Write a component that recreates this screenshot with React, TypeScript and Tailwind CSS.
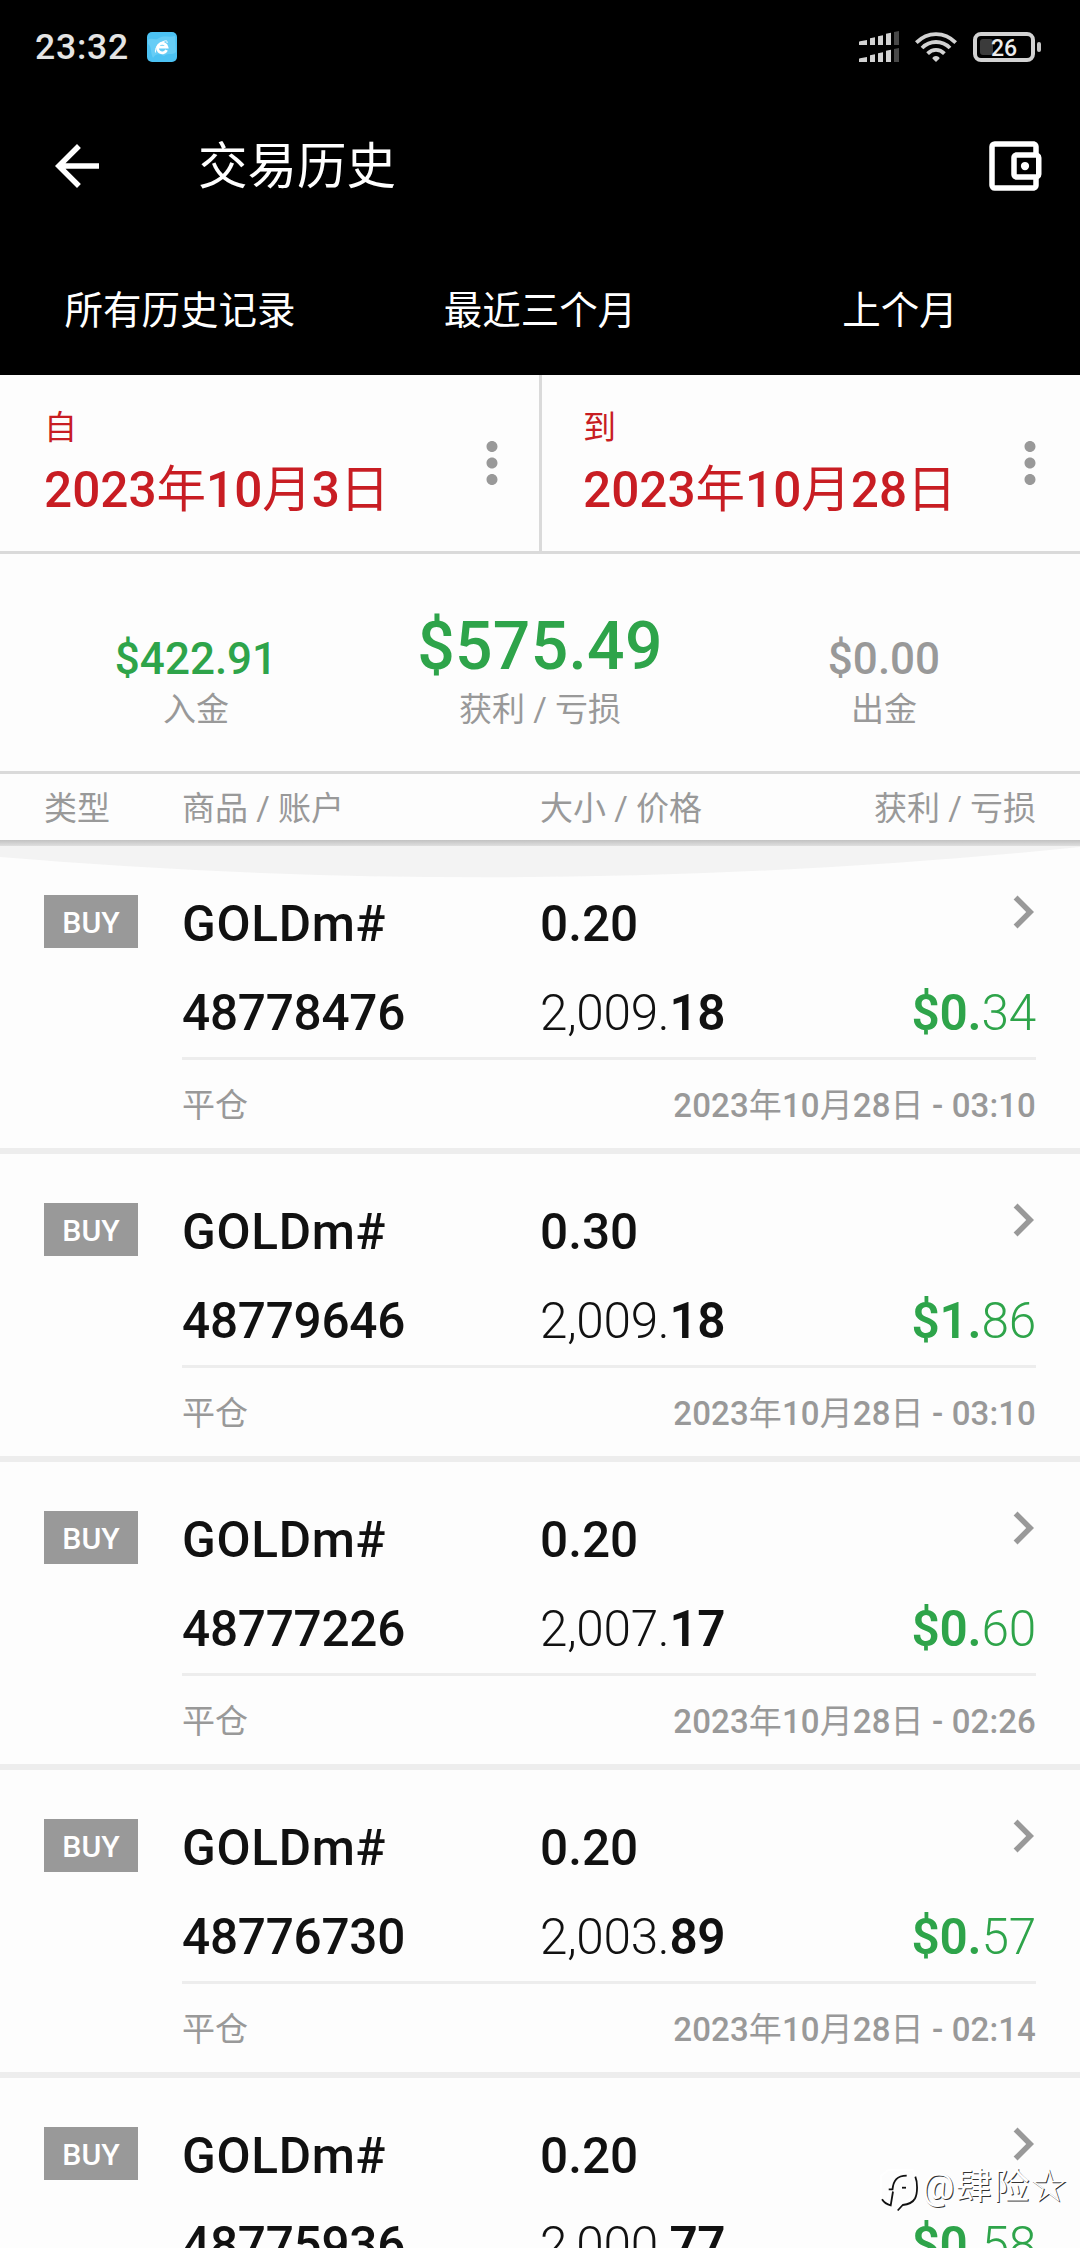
import React from "react";
import {
  MdArrowBack,
  MdChevronRight,
  MdMoreVert,
  MdOutlineAccountBalanceWallet,
} from "react-icons/md";

type Deal = {
  id: string;
  symbol: string;
  size: string;
  price: [string, string];
  profit: [string, string];
  closedAt: string;
};

const deals: Deal[] = [
  { id: "48778476", symbol: "GOLDm#", size: "0.20", price: ["2,009.", "18"], profit: ["$0.", "34"], closedAt: "2023年10月28日 - 03:10" },
  { id: "48779646", symbol: "GOLDm#", size: "0.30", price: ["2,009.", "18"], profit: ["$1.", "86"], closedAt: "2023年10月28日 - 03:10" },
  { id: "48777226", symbol: "GOLDm#", size: "0.20", price: ["2,007.", "17"], profit: ["$0.", "60"], closedAt: "2023年10月28日 - 02:26" },
  { id: "48776730", symbol: "GOLDm#", size: "0.20", price: ["2,003.", "89"], profit: ["$0.", "57"], closedAt: "2023年10月28日 - 02:14" },
  { id: "48775936", symbol: "GOLDm#", size: "0.20", price: ["2,000.", "77"], profit: ["$0.", "58"], closedAt: "" },
];

const tabs = ["所有历史记录", "最近三个月", "上个月"];

const SignalIcon = () => (
  <svg width="40" height="32" viewBox="0 0 40 32" fill="#d2d2d2">
    {[0, 17].map((y) => (
      <g key={y} transform={`translate(0 ${y})`}>
        <path d="M0 10.8L1 10.2L8 9v5H0z" />
        <path d="M11 7.3L16 6.3V14h-5z" />
        <path d="M19 5.3L24 4.3V14h-5z" />
        <path d="M27 2.8L32 1.8V14h-5z" />
        <path d="M35 1L40 0V14h-5z" fill="#484848" />
      </g>
    ))}
  </svg>
);

const WifiIcon = () => (
  <svg width="42" height="30" viewBox="0 0 42 30" fill="none" stroke="#d2d2d2" strokeWidth="3.8">
    <path d="M1.3 10.6C12.5-.8 29.5-.8 40.7 10.6" />
    <path d="M7 16C15 8 27 8 35 16" />
    <path d="M12.6 21.6C17.5 16.6 24.5 16.6 29.4 21.6" />
    <path d="M21 30L17.4 26.6C17.4 23.2 24.6 23.2 24.6 26.6z" fill="#d2d2d2" stroke="none" />
  </svg>
);

const BatteryIcon = () => (
  <div className="flex items-center gap-[2px]">
    <div className="relative flex h-[30px] w-[62px] items-center justify-center rounded-[8px] border-4 border-[#d2d2d2]">
      <div className="absolute top-[3px] left-[3px] h-4 w-[13px] rounded-[3px] bg-[#3b3b3b]" />
      <span className="relative top-px text-[23px] leading-none font-medium text-[#ececec]">26</span>
    </div>
    <div className="h-[10px] w-1 rounded-[2px] bg-[#c4c4c4]" />
  </div>
);

const BrowserIcon = () => (
  <svg width="30" height="30" viewBox="0 0 30 30">
    <rect width="30" height="30" rx="5" fill="#4cc2f3" />
    <path d="M1 8C5 5 8 9 12 6C17 3 22 6 28 4L29 20C25 24 22 20 17 24C12 21 8 22 6 26C3 20 5 14 1 12z" fill="#66cdf6" />
    <path d="M19.6 18.2A4.8 4.8 0 1 1 20 15.2H11" fill="none" stroke="#fff" strokeWidth="2.8" />
    <path d="M8.6 20.5C7.4 17 11 10.5 18.5 8.8C20 8.6 20.4 9.6 20 11" fill="none" stroke="#fff" strokeWidth="1" />
  </svg>
);

const DateCell = ({ label, date }: { label: string; date: string }) => (
  <div className="flex h-full flex-1 items-center justify-between text-[#c81d23]">
    <div className="pt-[2px]">
      <div className="text-[33px] leading-[40px]">{label}</div>
      <div className="mt-[12px] text-[49.5px] leading-[60px] font-medium whitespace-nowrap">
        <DateText text={date} />
      </div>
    </div>
    <MdMoreVert className="size-[66px] text-[#999]" />
  </div>
);

// digits are medium, han characters stay at regular weight
const DateText = ({ text }: { text: string }) => (
  <>
    {text.split(/([年月日])/).map((part, i) => (
      <span key={i} className={/[年月日]/.test(part) ? "font-normal" : "font-medium"}>
        {part}
      </span>
    ))}
  </>
);

const DealRow = ({ deal }: { deal: Deal }) => (
  <div className="flex h-[308px] shrink-0 border-b-[6px] border-[#ededed] pr-[44px] pl-[44px]">
    <div className="w-[138px] pt-[49px]">
      <div className="flex h-[53px] w-[94px] items-center justify-center bg-[#999] pt-[2px] text-[30.25px] font-medium text-white">
        BUY
      </div>
    </div>
    <div className="flex-1">
      <div className="flex h-[214px] border-b-[3px] border-[#ededed] pt-[48px] text-[49.5px] leading-[60px] text-[#111]">
        <div className="w-[358px] font-medium">
          <div className="tracking-[0.7px]">{deal.symbol}</div>
          <div className="mt-[29px] tracking-[-0.25px]">{deal.id}</div>
        </div>
        <div className="flex-1">
          <div className="font-medium">{deal.size}</div>
          <div className="mt-[29px] font-light tracking-[-0.3px]">
            {deal.price[0]}
            <span className="font-semibold">{deal.price[1]}</span>
          </div>
        </div>
        <div className="text-right">
          <MdChevronRight className="-mt-[15px] -mr-[20px] ml-auto size-[66px] text-[#999]" />
          <div className="mt-[38px] font-light tracking-[-0.2px] text-[#2ea44a]">
            <span className="font-semibold">{deal.profit[0]}</span>
            {deal.profit[1]}
          </div>
        </div>
      </div>
      {deal.closedAt && (
        <div className="flex h-[88px] items-center justify-between pt-[3px] text-[33px] text-[#999]">
          <span>平仓</span>
          <span className="tracking-[0.12px]">
            <DateText text={deal.closedAt} />
          </span>
        </div>
      )}
    </div>
  </div>
);

const Watermark = () => (
  <div className="absolute top-[2162px] left-[880px] flex items-center gap-[3px]">
    <svg width="39" height="50" viewBox="0 0 39 50" fill="none">
      <path d="M28 11H22C14 12 12 16 10 24L7 41L1 36V14L8 8H33L37 20L35 34L22 42L16 45" stroke="#fff" strokeWidth="2" />
      <g stroke="#111" strokeWidth="1.8">
        <path d="M8.7 27.3H12.5C13.5 18 17 13.8 26.7 13.6" />
        <path d="M22 25.7H26" />
        <path d="M13 29.5L10.7 43.3C7 42.5 4 40.5 2 37.3" />
        <path d="M35.3 14.7C37.6 20 37.8 31 35 36.5C32.5 41 28 42.5 22.7 43L17.7 48.5" />
      </g>
    </svg>
    <div className="text-[36px] leading-[50px] tracking-[1.5px] whitespace-nowrap text-white [text-shadow:1px_1px_0_#333]">
      @肆险☆
    </div>
  </div>
);

const App = () => {
  return (
    <div
      lang="zh-CN"
      className="relative flex h-[2248px] w-[1080px] flex-col overflow-hidden bg-[#fdfdfd] font-[Roboto,'Noto_Sans_CJK_SC',sans-serif]"
    >
      <header className="h-[375px] shrink-0 bg-black text-white">
        <div className="flex h-[94px] items-center justify-between pr-[39px] pl-[35px]">
          <div className="flex items-center gap-[18px]">
            <span className="pt-[2px] text-[35.5px] font-medium tracking-[0.8px] text-[#e4e4e4]">23:32</span>
            <BrowserIcon />
          </div>
          <div className="flex items-center gap-4">
            <SignalIcon />
            <WifiIcon />
            <BatteryIcon />
          </div>
        </div>
        <div className="flex h-[144px] items-center pr-[33px] pl-[44px]">
          <MdArrowBack className="size-[66px]" />
          <h1 className="ml-[88px] flex-1 pt-[3px] text-[49.5px]">交易历史</h1>
          <MdOutlineAccountBalanceWallet className="size-[66px]" />
        </div>
        <div className="grid h-[144px] grid-cols-3 items-center pt-[2px] text-center text-[38.5px]">
          {tabs.map((tab) => (
            <div key={tab}>{tab}</div>
          ))}
        </div>
      </header>

      <section className="flex h-[179px] shrink-0 border-b-[3px] border-[#dadada]">
        <div className="flex w-[542px] border-r-[3px] border-[#dadada] pr-[14px] pl-[44px]">
          <DateCell label="自" date="2023年10月3日" />
        </div>
        <div className="flex flex-1 pr-[17px] pl-[41px]">
          <DateCell label="到" date="2023年10月28日" />
        </div>
      </section>

      <section className="grid h-[220px] shrink-0 grid-cols-[392px_296px_392px] items-end border-b-[3px] border-[#dadada] pb-[41px] text-center text-[33px] leading-[40px] text-[#999]">
        <div>
          <div className="text-[44px] leading-[62px] font-medium text-[#2ea44a]">$422.91</div>
          <div>入金</div>
        </div>
        <div>
          <div className="text-[66px] leading-[87px] font-medium tracking-[0.3px] text-[#2ea44a]">$575.49</div>
          <div>获利 / 亏损</div>
        </div>
        <div>
          <div className="text-[44px] leading-[62px] font-medium">$0.00</div>
          <div>出金</div>
        </div>
      </section>

      <div className="flex h-[66px] shrink-0 items-center px-[44px] pt-[3px] text-[33px] text-[#999]">
        <span className="w-[138px]">类型</span>
        <span className="w-[358px]">商品 / 账户</span>
        <span className="flex-1">大小 / 价格</span>
        <span>获利 / 亏损</span>
      </div>
      <div className="h-[6px] shrink-0 bg-linear-to-b from-[#c2c2c2] to-[#dfdfdf]" />

      <main className="relative">
        {/* overscroll glow */}
        <svg className="absolute top-0 left-0" width="1080" height="34" viewBox="0 0 1080 34">
          <path d="M0 0H1080V1Q540 56 0 11z" fill="#f3f3f3" />
        </svg>
        {deals.map((deal) => (
          <DealRow key={deal.id} deal={deal} />
        ))}
      </main>

      <Watermark />
    </div>
  );
};

export default App;
